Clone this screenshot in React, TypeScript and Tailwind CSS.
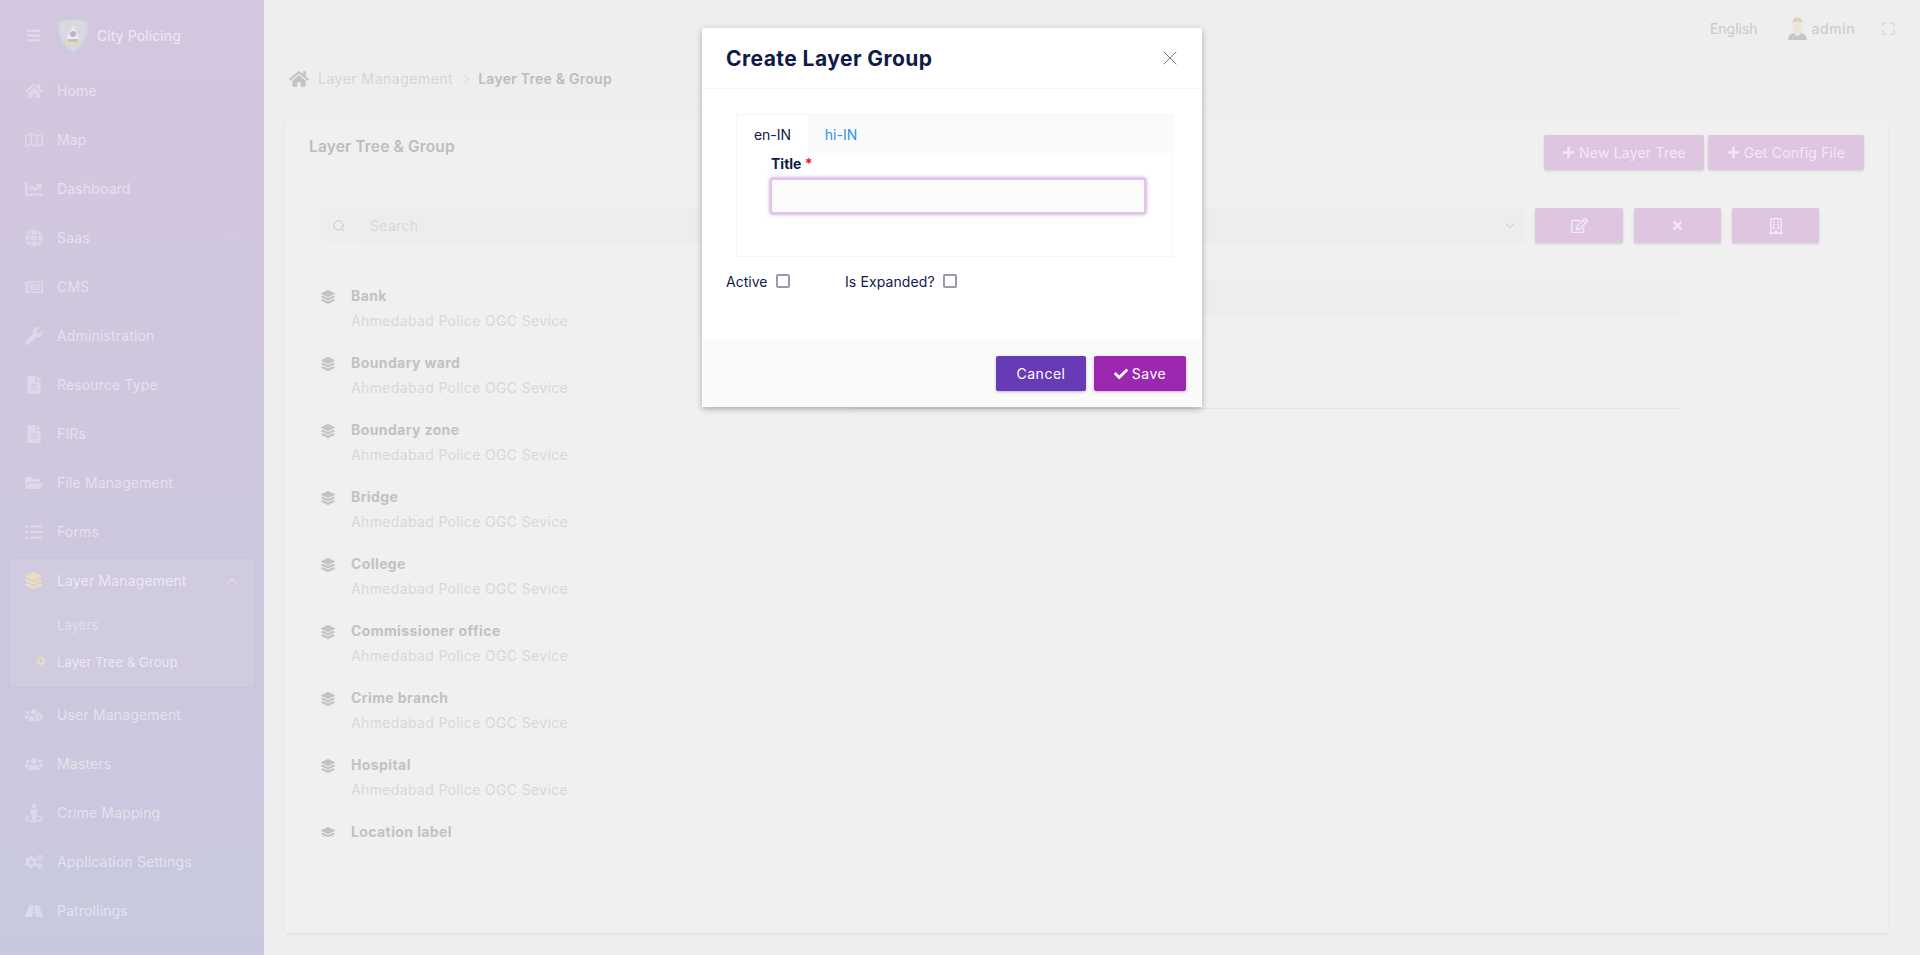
import {
  FaBars,
  FaHome,
  FaRegMap,
  FaChartLine,
  FaGlobe,
  FaRegNewspaper,
  FaWrench,
  FaFileAlt,
  FaFolderOpen,
  FaListUl,
  FaLayerGroup,
  FaUsersCog,
  FaUsers,
  FaStreetView,
  FaCogs,
  FaRoad,
  FaPlus,
  FaRegEdit,
  FaTimes,
  FaRegBuilding,
  FaCheck,
} from "react-icons/fa";
import { ChevronDown, ChevronUp, ChevronRight, Search, X, Maximize } from "lucide-react";

const menuTop = [
  { label: "Home", icon: FaHome },
  { label: "Map", icon: FaRegMap },
  { label: "Dashboard", icon: FaChartLine },
  { label: "Saas", icon: FaGlobe, arrow: true },
  { label: "CMS", icon: FaRegNewspaper, arrow: true },
  { label: "Administration", icon: FaWrench, arrow: true },
  { label: "Resource Type", icon: FaFileAlt },
  { label: "FIRs", icon: FaFileAlt },
  { label: "File Management", icon: FaFolderOpen },
  { label: "Forms", icon: FaListUl },
];

const menuBottom = [
  { label: "User Management", icon: FaUsersCog },
  { label: "Masters", icon: FaUsers },
  { label: "Crime Mapping", icon: FaStreetView },
  { label: "Application Settings", icon: FaCogs },
  { label: "Patrollings", icon: FaRoad },
];

const layers = [
  "Bank",
  "Boundary ward",
  "Boundary zone",
  "Bridge",
  "College",
  "Commissioner office",
  "Crime branch",
  "Hospital",
];

const MenuItem = ({ label, icon: Icon, arrow }: { label: string; icon: any; arrow?: boolean }) => (
  <div className="flex h-[49px] items-center pl-[25px] pr-[24px] text-[14px] tracking-[0.15px] text-[#e6e1ec]">
    <span className="flex w-[32px] shrink-0 items-center">
      <Icon size={18} className="text-[#dfd8e8]" />
    </span>
    <span className="flex-1">{label}</span>
    {arrow && <ChevronDown size={16} strokeWidth={1.5} className="text-[#d6cfe0]" />}
  </div>
);

const LayerRow = ({ title, sub }: { title: string; sub?: boolean }) => (
  <div className="flex h-[67px] items-start">
    {/* last icon is cut off by the scroll area in the original */}
    <span className={sub ? "mt-[4px] mr-[16px] block h-[14px] w-[14px] shrink-0" : "mt-[5px] mr-[16px] block h-[10px] w-[14px] shrink-0 overflow-hidden"}>
      <FaLayerGroup size={14} className="text-[#c4c4c4]" />
    </span>
    <div>
      <div className="text-[14px] font-bold leading-[20px] tracking-[0.4px] text-[#c2c2c2]">{title}</div>
      {sub && <div className="mt-[5px] text-[14px] leading-[20px] tracking-[0.35px] text-[#d8d8d8]">Ahmedabad Police OGC Sevice</div>}
    </div>
  </div>
);

const Logo = () => (
  <svg width="32" height="34" viewBox="0 0 32 34" className="ml-[16px] shrink-0">
    <path d="M2 3 Q16 -1 30 3 Q32 22 16 33 Q0 22 2 3Z" fill="#d9d8e4" stroke="#c6d8e2" strokeWidth="1.5" />
    <path d="M5 6 Q16 3 27 6" fill="none" stroke="#e4dcb8" strokeWidth="1.5" strokeDasharray="2 1" />
    <path d="M16 7 L19 12 L22 20 L10 20 L13 12Z" fill="#ecebf0" />
    <circle cx="16" cy="15" r="3" fill="#b9b4c4" />
    <rect x="11" y="20" width="10" height="3" fill="#c4bfce" />
    <path d="M8 22 Q16 30 24 22" fill="none" stroke="#e6dca6" strokeWidth="2.5" />
  </svg>
);

const Avatar = () => (
  <svg width="21" height="23" viewBox="0 0 21 23" className="ml-[29px] shrink-0">
    <path d="M1 23 Q1 16 10.5 15 Q20 16 20 23Z" fill="#c6c6c6" />
    <path d="M10.5 19 C6 19 5.5 10 5.5 6 C5.5 2 8 0.5 10.5 0.5 C13 0.5 15.5 2 15.5 6 C15.5 10 15 19 10.5 19Z" fill="#ede5da" />
    <path d="M5.5 6 C5.5 2 8 0.5 10.5 0.5 C13 0.5 15.5 2 15.5 6 C13 4 8 4 5.5 6Z" fill="#ddd0b8" />
  </svg>
);

export default function App() {
  return (
    <div className="relative flex h-[955px] w-[1920px] overflow-hidden bg-[#eeeeee] font-['Inter','Liberation_Sans',sans-serif]">
      {/* Sidebar */}
      <aside className="flex h-full w-[264px] shrink-0 flex-col bg-gradient-to-b from-[#d4c6df] to-[#c8c9de]">
        <div className="flex h-[72px] items-center pb-[1px] pl-[26px]">
          <FaBars size={15} className="text-[#e2dcea]" />
          <Logo />
          <span className="ml-[8px] text-[14px] tracking-[0.1px] text-[#efeaf3]">City Policing</span>
        </div>
        <nav className="mt-[-6px] flex flex-col">
          {menuTop.map((m) => (
            <MenuItem key={m.label} {...m} />
          ))}
          <div className="mx-[10px] mt-[3px] h-[128px] rounded-[2px] bg-[#d0cbdf] shadow-[0_0_3px_rgba(150,140,180,0.15)]">
            <div className="flex h-[43px] items-center pl-[15px] pr-[14px] text-[14px] tracking-[0.15px] text-[#ece8f1]">
              <span className="flex w-[32px] shrink-0 items-center">
                <FaLayerGroup size={17} className="text-[#ecdcc0]" />
              </span>
              <span className="flex-1">Layer Management</span>
              <ChevronUp size={16} strokeWidth={1.75} className="text-[#ecdcc8]" />
            </div>
            <div className="mt-[13px] pl-[47px] text-[13px] leading-[20px] tracking-[0.1px] text-[#e3dfea]">Layers</div>
            <div className="relative mt-[17px] pl-[47px] text-[13px] leading-[20px] tracking-[0.1px] text-[#ece8f1]">
              <span className="absolute left-[27px] top-[5px] h-[8px] w-[8px] rounded-full border-2 border-[#ecdcc0]" />
              Layer Tree &amp; Group
            </div>
          </div>
          <div className="h-[3px]" />
          {menuBottom.map((m) => (
            <MenuItem key={m.label} {...m} arrow />
          ))}
        </nav>
      </aside>

      {/* Page */}
      <main className="flex min-w-0 flex-1 flex-col pl-[21px] pr-[32px]">
        <div className="mr-[-7px] flex h-[56px] items-center justify-end text-[14px] text-[#c9c9c9]">
          <span>English</span>
          <Avatar />
          <span className="ml-[4px] tracking-[0.6px]">admin</span>
          <Maximize size={15} strokeWidth={1.5} className="ml-[26px] mr-[-1px] text-[#c9c9c9]" />
        </div>
        <div className="flex h-[50px] items-center border-b border-[#e9e9e9] pb-[4px] pl-[4px] text-[14px]">
          <FaHome size={20} className="mr-[9px] text-[#c4c4c4]" />
          <span className="tracking-[0.5px] text-[#d6d6d6]">Layer Management</span>
          <ChevronRight size={18} strokeWidth={1.25} className="ml-[4px] mr-[3px] text-[#d0d0d0]" />
          <span className="font-semibold tracking-[0.25px] text-[#bcbcbc]">Layer Tree &amp; Group</span>
        </div>
        <section className="mt-[15px] flex h-[812px] flex-col rounded-[2px] bg-[#f0f0f0] pb-[25px] shadow-[0_1px_2px_rgba(0,0,0,0.08)]">
          <div className="flex h-[75px] shrink-0 items-start justify-between pl-[24px] pr-[24px] pt-[14px]">
            <h2 className="text-[15.5px] font-semibold tracking-[0.15px] text-[#bdbdbd]">Layer Tree &amp; Group</h2>
            <div className="flex gap-[4px] text-[14px] tracking-[0.2px] text-[#efeaf1]">
              <button className="flex h-[35px] w-[160px] items-center justify-center gap-[4px] whitespace-nowrap rounded-[2px] bg-[#dec6e1] shadow-sm">
                <FaPlus size={13} /> New Layer Tree
              </button>
              <button className="flex h-[35px] w-[156px] items-center justify-center gap-[4px] whitespace-nowrap rounded-[2px] bg-[#dec6e1] shadow-sm">
                <FaPlus size={13} /> Get Config File
              </button>
            </div>
          </div>
          <div className="flex flex-1">
            <div className="w-[538px] shrink-0 border-r border-[#ececec] pl-[37px]">
              <div className="mt-[12px] flex h-[35px] w-[480px] rounded-[2px] bg-[#ededed]">
                <span className="flex w-[34px] items-center justify-center bg-[#eeeeee]">
                  <Search size={14} strokeWidth={1.5} className="text-[#c2c2c2]" />
                </span>
                <span className="flex items-center pl-[14px] text-[14px] tracking-[0.3px] text-[#d8d8d8]">Search</span>
              </div>
              <div className="mt-[43px] -ml-[1px]">
                {layers.map((t) => (
                  <LayerRow key={t} title={t} sub />
                ))}
                <LayerRow title="Location label" />
              </div>
            </div>
            <div className="flex-1 pl-[27px]">
              <div className="mt-[12px] flex items-center">
                <div className="flex h-[35px] w-[675px] items-center justify-end rounded-[2px] bg-[#ededed] pr-[8px]">
                  <ChevronDown size={14} strokeWidth={1.5} className="text-[#b8b8b8]" />
                </div>
                <div className="ml-[10px] flex gap-[11px] text-[#f0ebf2]">
                  <button className="flex h-[35px] w-[88px] items-center justify-center rounded-[2px] bg-[#dec6e1] shadow-sm"><FaRegEdit size={17} /></button>
                  <button className="flex h-[35px] w-[87px] items-center justify-center rounded-[2px] bg-[#dec6e1] shadow-sm"><FaTimes size={13} /></button>
                  <button className="flex h-[35px] w-[87px] items-center justify-center rounded-[2px] bg-[#dec6e1] shadow-sm"><FaRegBuilding size={16} /></button>
                </div>
              </div>
              <div className="mt-[37px] h-[35px] w-[830px] rounded-[2px] bg-[#ededed]" />
              <div className="mt-[93px] h-[1px] w-[830px] bg-[#e4e4e4]" />
            </div>
          </div>
        </section>
      </main>

      {/* Modal */}
      <div className="absolute top-[28px] left-[702px] w-[500px] rounded-[2px] bg-white text-[#0f1a4b] shadow-[0_2px_6px_rgba(0,0,0,0.3)]">
        <div className="flex h-[61px] items-center justify-between border-b border-[#f5f5f5] pr-[20px] pl-[24px]">
          <h3 className="pt-[2px] text-[21px] font-bold tracking-[0.45px]">Create Layer Group</h3>
          <X size={24} strokeWidth={0.8} className="text-[#55596f]" />
        </div>
        <div className="h-[251px] px-[24px] pt-[25px]">
          <div className="ml-[10px] w-[437px] border border-[#f5f5f5]">
            <div className="flex h-[38px] bg-[#fafafa] text-[14px]">
              <span className="flex w-[71px] items-center justify-center bg-white">en-IN</span>
              <span className="flex w-[66px] items-center justify-center text-[#2f8ff5]">hi-IN</span>
            </div>
            <div className="h-[103px] px-[33px]">
              <label className="block pl-[1px] pt-[1px] text-[14px] leading-[20px] font-bold">
                Title <span className="text-[#f01818]">*</span>
              </label>
              <div className="mt-[4px] h-[36px] w-[376px] rounded-[3px] border-[2px] border-[#e2c4e8] bg-[#fbfbfb] shadow-[0_0_0_1px_rgba(226,196,232,0.6),0_0_4px_rgba(156,39,176,0.45)]" />
            </div>
          </div>
          <div className="mt-[17px] flex h-[14px] items-center text-[14px]">
            <span className="w-[42px] whitespace-nowrap">Active</span>
            <span className="ml-[8px] h-[14px] w-[14px] rounded-[2px] border-[2px] border-[#9a99ad]" />
            <span className="ml-[55px] w-[90px] whitespace-nowrap tracking-[0.1px]">Is Expanded?</span>
            <span className="ml-[8px] h-[14px] w-[14px] rounded-[2px] border-[2px] border-[#9a99ad]" />
          </div>
        </div>
        <div className="flex h-[67px] items-center justify-end gap-[8px] bg-[#fafafa] pr-[16px] text-[14px] tracking-[0.5px] text-white">
          <button className="flex h-[35px] w-[90px] items-center justify-center rounded-[2px] bg-[#673ab7] shadow-[0_1px_3px_rgba(0,0,0,0.25)]">Cancel</button>
          <button className="flex h-[35px] w-[92px] items-center justify-center gap-[4px] rounded-[2px] bg-[#9c27b0] shadow-[0_1px_3px_rgba(0,0,0,0.25)]">
            <FaCheck size={14} /> Save
          </button>
        </div>
      </div>
    </div>
  );
}
